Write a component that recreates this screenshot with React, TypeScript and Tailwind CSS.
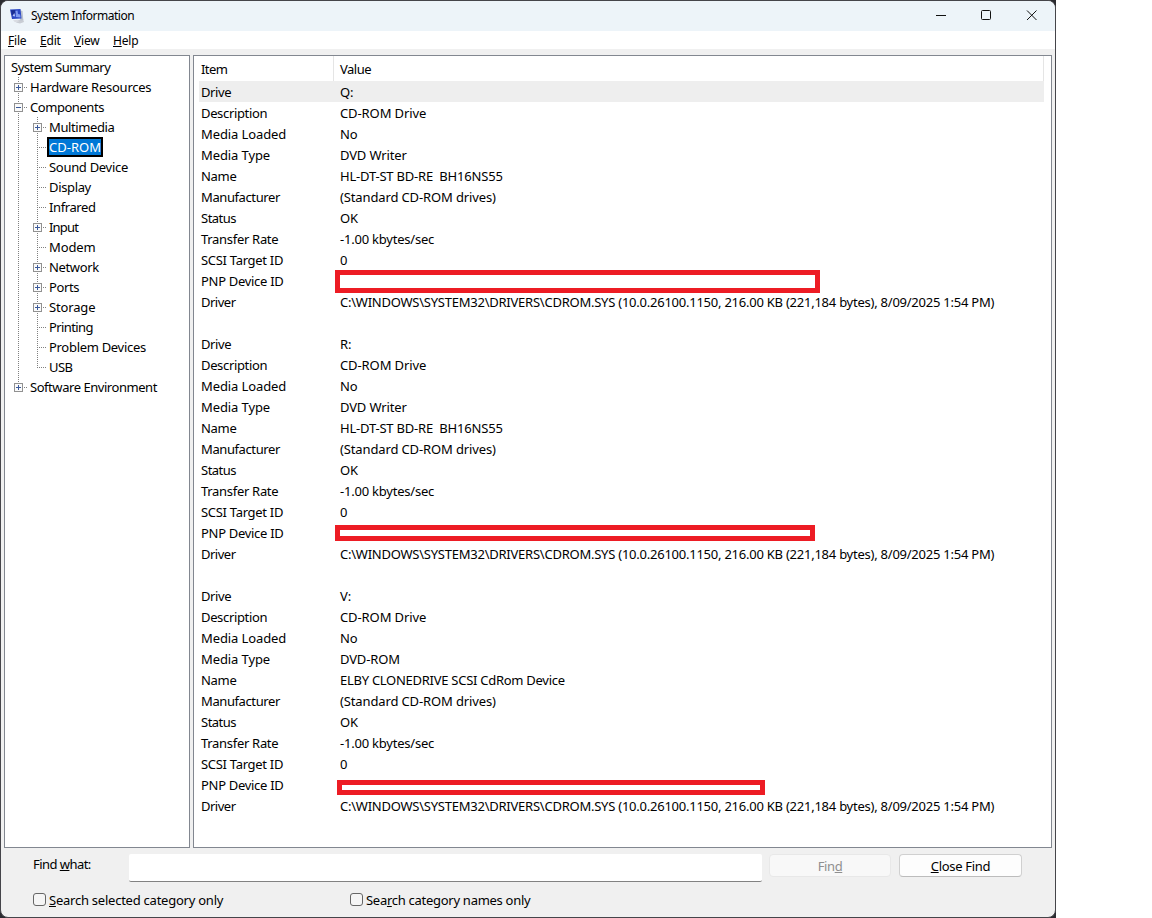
import { useState } from "react";
import type { ReactNode } from "react";

type TreeItem = {
  label: string;
  depth: number;
  track: string;
  box?: "plus" | "minus";
  last?: boolean;
};

const treeItems: TreeItem[] = [
  { label: "System Summary", depth: 0, track: "tracking-[-0.5px]" },
  { label: "Hardware Resources", depth: 1, box: "plus", track: "tracking-[-0.25px]" },
  { label: "Components", depth: 1, box: "minus", track: "tracking-[-0.45px]" },
  { label: "Multimedia", depth: 2, box: "plus", track: "tracking-[-0.4px]" },
  { label: "CD-ROM", depth: 2, track: "tracking-[0px]" },
  { label: "Sound Device", depth: 2, track: "tracking-[-0.3px]" },
  { label: "Display", depth: 2, track: "tracking-[-0.35px]" },
  { label: "Infrared", depth: 2, track: "tracking-[-0.4px]" },
  { label: "Input", depth: 2, box: "plus", track: "tracking-[-0.8px]" },
  { label: "Modem", depth: 2, track: "tracking-[-0.1px]" },
  { label: "Network", depth: 2, box: "plus", track: "tracking-[-0.35px]" },
  { label: "Ports", depth: 2, box: "plus", track: "tracking-[-0.4px]" },
  { label: "Storage", depth: 2, box: "plus", track: "tracking-[-0.15px]" },
  { label: "Printing", depth: 2, track: "tracking-[-0.6px]" },
  { label: "Problem Devices", depth: 2, track: "tracking-[-0.3px]" },
  { label: "USB", depth: 2, track: "tracking-[-0.6px]", last: true },
  { label: "Software Environment", depth: 1, box: "plus", track: "tracking-[-0.45px]", last: true },
];

const driver =
  "C:\\WINDOWS\\SYSTEM32\\DRIVERS\\CDROM.SYS (10.0.26100.1150, 216.00 KB (221,184 bytes), 8/09/2025 1:54 PM)";

const drives = [
  { letter: "Q:", type: "DVD Writer", name: "HL-DT-ST BD-RE  BH16NS55", redact: "-ml-[5px] mt-[-1px] h-[23px] w-[485px]" },
  { letter: "R:", type: "DVD Writer", name: "HL-DT-ST BD-RE  BH16NS55", redact: "-ml-[5px] mt-[2px] h-4 w-[480px]" },
  { letter: "V:", type: "DVD-ROM", name: "ELBY CLONEDRIVE SCSI CdRom Device", redact: "-ml-[3px] mt-[5px] h-[15px] w-[428px]" },
];

// letter spacing per row label
const itemTrack: Record<string, string> = {
  Drive: "tracking-[-0.4px]",
  Description: "tracking-[-0.35px]",
  "Media Loaded": "tracking-[-0.1px]",
  "Media Type": "tracking-[-0.1px]",
  Name: "tracking-[-0.3px]",
  Manufacturer: "tracking-[-0.4px]",
  Status: "tracking-[-0.5px]",
  "Transfer Rate": "tracking-[-0.3px]",
  "SCSI Target ID": "tracking-[-0.3px]",
  "PNP Device ID": "tracking-[-0.3px]",
  Driver: "tracking-[-0.5px]",
};

function TreeGuide({ item, level }: { item: TreeItem; level: number }) {
  const own = level === item.depth;
  return (
    <svg width="19" height="20" className="shrink-0" shapeRendering="crispEdges">
      <path
        d={own && item.last ? "M9.5 0V11" : "M9.5 0V20"}
        stroke="#808080"
        strokeDasharray="1 1"
      />
      {own && <path d="M9 10.5H18" stroke="#808080" strokeDasharray="1 1" />}
      {own && item.box && (
        <>
          <rect x="5.5" y="6.5" width="8" height="8" fill="#fafafa" stroke="#919191" />
          <path d="M7 10.5H12" stroke="#3b5a9a" />
          {item.box === "plus" && <path d="M9.5 8V13" stroke="#3b5a9a" />}
        </>
      )}
    </svg>
  );
}

function TreeRow({ item, selected, onSelect }: { item: TreeItem; selected: boolean; onSelect: () => void }) {
  return (
    <div className={`flex h-5 cursor-default items-center ${item.track}`} onClick={onSelect}>
      {item.depth > 0 && <TreeGuide item={item} level={1} />}
      {item.depth > 1 && <TreeGuide item={item} level={2} />}
      <span
        className={
          selected
            ? "h-5 border-2 border-black bg-[#0078d7] leading-4 text-white"
            : "px-0.5 leading-5"
        }
      >
        {item.label}
      </span>
    </div>
  );
}

type RowProps = { item: string; children?: ReactNode; active?: boolean; track?: string };

function Row({ item, children, active, track = "tracking-[-0.1px]" }: RowProps) {
  return (
    <div className={`flex h-[21px] leading-[21px] ${active ? "bg-[#eeeeee]" : ""}`}>
      <div className={`w-[139px] shrink-0 pl-0.5 pt-px ${itemTrack[item]}`}>{item}</div>
      <div className={`whitespace-pre pl-0.5 pt-px ${track}`}>{children}</div>
    </div>
  );
}

function AppIcon() {
  return (
    <svg width="16" height="16" viewBox="0 0 16 16">
      <path d="M9 12l5-1 1 3-4 1.5-4-1z" fill="#c9cdd4" />
      <path d="M10 2l3.5 1 .8 9-3 .5z" fill="#b9c0cc" />
      <path d="M1 1.5L11.5 1l1 9.5L3 11z" fill="#2c48c4" />
      <path d="M2 2.3L6 2l.5 3.5L3 8z" fill="#1b2f93" />
      <path d="M6.5 3l2-.4L9 6l2.2.4.4 3L7 9z" fill="#7f9bf0" />
      <path d="M3.5 8l1.8-3 .9 3.5z" fill="#b6c6fa" />
      <path d="M4 12.2l5-.4 1 1.8-4 .6z" fill="#d9dce2" />
    </svg>
  );
}

export default function App() {
  const [selected, setSelected] = useState("CD-ROM");
  const [query, setQuery] = useState("");

  return (
    <div className="h-[918px] w-[1152px] overflow-hidden bg-white font-['Noto_Sans','Open_Sans',sans-serif] text-[13px] text-black">
      <div className="h-full w-[1056px] bg-[#2b2b30]">
        <div className="flex h-full flex-col overflow-hidden rounded-lg border border-[#45454a] bg-[#f0f0f0]">
          {/* title bar */}
          <div className="flex h-[30px] shrink-0 items-center bg-[#edf4f9] pl-2">
            <AppIcon />
            <span className="ml-[6px] text-[12px] tracking-[-0.48px]">System Information</span>
            <svg width="120" height="30" className="ml-auto" fill="none" stroke="#111">
              <path d="M1 14.5H11" shapeRendering="crispEdges" />
              <rect x="46.5" y="9.5" width="9" height="9" rx="1" />
              <path d="M92 9.5l9.5 9.5M101.5 9.5L92 19" />
            </svg>
          </div>

          {/* menu */}
          <div className="flex h-[18px] shrink-0 bg-white pl-[7px] text-[12px] leading-5 tracking-[-0.2px]">
            <span className="w-8"><u>F</u>ile</span>
            <span className="w-[34px]"><u>E</u>dit</span>
            <span className="w-[39px]"><u>V</u>iew</span>
            <span><u>H</u>elp</span>
          </div>

          <div className="mt-[6px] flex h-[793px] shrink-0 gap-[3px] pl-[3px]">
            <div className="w-[186px] border border-[#828790] bg-white pl-1 pt-px">
              {treeItems.map((item) => (
                <TreeRow
                  key={item.label}
                  item={item}
                  selected={item.label === selected}
                  onSelect={() => setSelected(item.label)}
                />
              ))}
            </div>

            <div className="w-[859px] border border-[#828790] bg-white pl-[5px] pr-[7px]">
              <div className="flex h-[25px] border-r border-[#e5e5e5] leading-[27px]">
                <div className="w-[135px] border-r border-[#e5e5e5] pl-0.5 tracking-[-0.6px]">Item</div>
                <div className="pl-[6px] tracking-[-0.5px]">Value</div>
              </div>
              {drives.map((d, i) => (
                <div key={d.letter} className="mb-[21px]">
                  <Row item="Drive" active={i === 0}>{d.letter}</Row>
                  <Row item="Description">CD-ROM Drive</Row>
                  <Row item="Media Loaded">No</Row>
                  <Row item="Media Type" track="tracking-[-0.15px]">{d.type}</Row>
                  <Row item="Name" track={i === 2 ? "tracking-[-0.27px]" : "tracking-[-0.2px]"}>{d.name}</Row>
                  <Row item="Manufacturer" track="tracking-[-0.13px]">(Standard CD-ROM drives)</Row>
                  <Row item="Status">OK</Row>
                  <Row item="Transfer Rate" track="tracking-[-0.22px]">-1.00 kbytes/sec</Row>
                  <Row item="SCSI Target ID">0</Row>
                  <Row item="PNP Device ID">
                    <div className={`border-5 border-[#ed1c24] bg-white ${d.redact}`} />
                  </Row>
                  <Row item="Driver" track="tracking-[-0.24px]">{driver}</Row>
                </div>
              ))}
            </div>
          </div>

          {/* find bar */}
          <div className="flex h-[34px] shrink-0 pl-8 pt-[6px]">
            <label htmlFor="find" className="w-24 pt-px leading-[18px] tracking-[-0.55px]">
              Find <u>w</u>hat:
            </label>
            <input
              id="find"
              value={query}
              onChange={(e) => setQuery(e.target.value)}
              className="h-7 w-[633px] rounded-[2px] border-b border-[#828282] bg-white px-1 outline-none"
            />
            <button disabled className="ml-[7px] h-[23px] w-[122px] rounded border border-[#e8e8e8] bg-[#f8f8f8] leading-[22px] tracking-[-0.4px] text-[#8f8f8f]">
              Fin<u>d</u>
            </button>
            <button className="ml-2 h-[23px] w-[123px] rounded border border-[#d0d0d0] border-b-[#bcbcbc] bg-[#fdfdfd] leading-[22px] tracking-[-0.3px]">
              <u>C</u>lose Find
            </button>
          </div>
          <div className="flex pl-8 pt-[9px] leading-[18px]">
            <label className="flex w-[317px] gap-[3px]">
              <input type="checkbox" className="mt-[2px] size-[13px] appearance-none rounded-[3px] border border-[#666] bg-[#f5f5f5]" />
              <span className="tracking-[-0.24px]"><u>S</u>earch selected category only</span>
            </label>
            <label className="flex gap-[3px]">
              <input type="checkbox" className="mt-[2px] size-[13px] appearance-none rounded-[3px] border border-[#666] bg-[#f5f5f5]" />
              <span className="tracking-[-0.28px]">Sea<u>r</u>ch category names only</span>
            </label>
          </div>
        </div>
      </div>
    </div>
  );
}
